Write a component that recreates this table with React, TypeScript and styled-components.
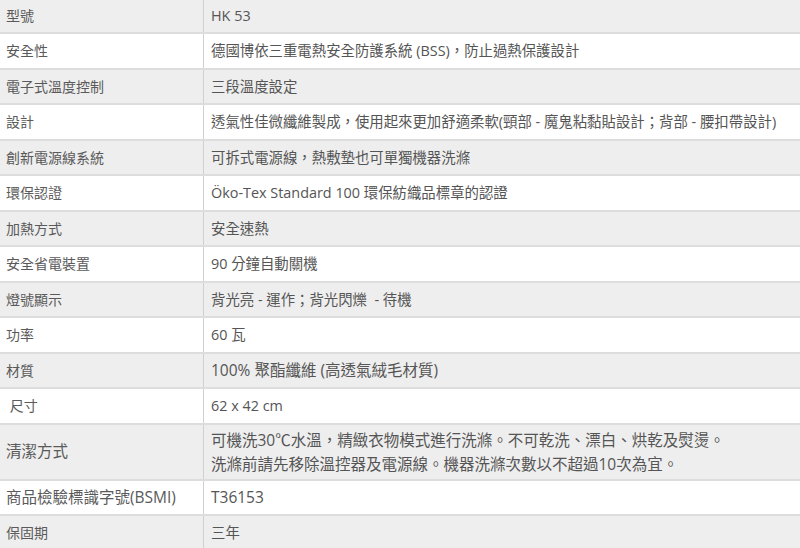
import React from 'react';
import styled, { createGlobalStyle } from 'styled-components';

interface SpecRow {
  label: string;
  value: React.ReactNode;
  big?: boolean;
  bigValue?: boolean;
  tall?: boolean;
}

const rows: SpecRow[] = [
  { label: '型號', value: 'HK 53' },
  { label: '安全性', value: '德國博依三重電熱安全防護系統 (BSS)，防止過熱保護設計' },
  { label: '電子式溫度控制', value: '三段溫度設定' },
  { label: '設計', value: '透氣性佳微纖維製成，使用起來更加舒適柔軟(頸部 - 魔鬼粘黏貼設計；背部 - 腰扣帶設計)' },
  { label: '創新電源線系統', value: '可拆式電源線，熱敷墊也可單獨機器洗滌' },
  { label: '環保認證', value: 'Öko-Tex Standard 100 環保紡織品標章的認證' },
  { label: '加熱方式', value: '安全速熱' },
  { label: '安全省電裝置', value: '90 分鐘自動關機' },
  { label: '燈號顯示', value: '背光亮 - 運作；背光閃爍\u00a0\u00a0- 待機' },
  { label: '功率', value: '60 瓦' },
  { label: '材質', value: '100% 聚酯纖維 (高透氣絨毛材質)', bigValue: true },
  { label: '\u00a0尺寸', value: '62 x 42 cm' },
  {
    label: '清潔方式',
    value: (
      <>
        可機洗30℃水溫，精緻衣物模式進行洗滌。不可乾洗、漂白、烘乾及熨燙。
        <br />
        洗滌前請先移除溫控器及電源線。機器洗滌次數以不超過10次為宜。
      </>
    ),
    big: true,
    tall: true,
  },
  { label: '商品檢驗標識字號(BSMI)', value: 'T36153', big: true },
  { label: '保固期', value: '三年' },
];

const App: React.FC = () => {
  return (
    <>
      <GlobalStyle />
      <SpecTable>
        {rows.map((row, i) => (
          <Row key={i} $striped={i % 2 === 0}>
            <LabelCell $big={row.big}>{row.label}</LabelCell>
            <ValueCell $big={row.big || row.bigValue} $tall={row.tall}>
              {row.value}
            </ValueCell>
          </Row>
        ))}
      </SpecTable>
    </>
  );
};

const GlobalStyle = createGlobalStyle`
  html, body {
    margin: 0;
    padding: 0;
    background: #ffffff;
    overflow: hidden;
  }
  body {
    font-family: "Open Sans", "Noto Sans CJK TC", sans-serif;
    color: #555555;
  }
`;

const SpecTable = styled.div`
  display: flex;
  flex-direction: column;
  width: 800px;
  margin-top: -1.5px;
`;

const Row = styled.div<{ $striped: boolean }>`
  display: grid;
  grid-template-columns: 204px 1fr;
  background: ${(p) => (p.$striped ? '#eeeeee' : '#ffffff')};
  border-bottom: 2px solid #dddddd;
`;

const LabelCell = styled.div<{ $big?: boolean }>`
  display: flex;
  align-items: center;
  padding: 6px 6px;
  font-size: ${(p) => (p.$big ? '15.5px' : '14px')};
  line-height: 21.5px;
  color: #5a5a5a;
  border-right: 1px solid #d0d0d0;
  white-space: nowrap;
`;

const ValueCell = styled.div<{ $big?: boolean; $tall?: boolean }>`
  padding: ${(p) => (p.$tall ? '3px 7px' : '6px 7px')};
  font-size: ${(p) => (p.$big ? '15.5px' : '14.4px')};
  line-height: ${(p) => (p.$tall ? '24px' : '21.5px')};
  color: #555555;
  white-space: nowrap;
`;

export default App;
